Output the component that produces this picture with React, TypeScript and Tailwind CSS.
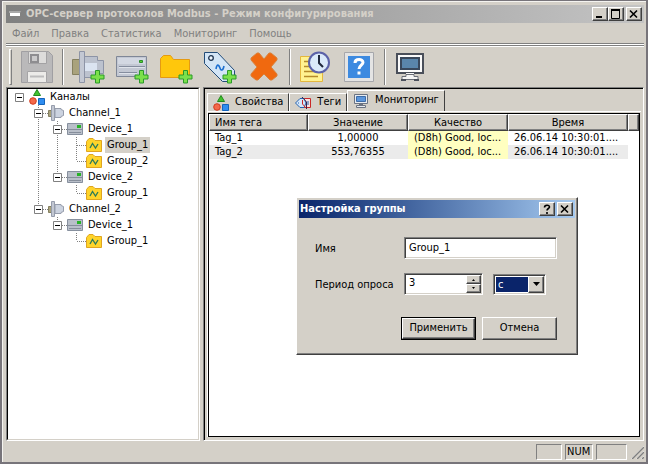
import { useState } from 'react';
import type { ReactNode } from 'react';
import clsx from 'clsx';

/** Raised 3D edge shared by push buttons, caption buttons and column headers. */
const RAISED =
  'border border-t-white border-l-white border-r-[#404040] border-b-[#404040] bg-[#d4d0c8] shadow-[inset_-1px_-1px_#808080]';
/** Sunken 3D edge shared by text boxes. */
const SUNKEN =
  'border border-t-[#808080] border-l-[#808080] border-r-white border-b-white bg-white shadow-[inset_1px_1px_#404040,inset_-1px_-1px_#d4d0c8]';

/* ── Icons ── */

function Plus() {
  return (
    <path
      d="M23.500 19.500h4v4.500h4.500v4h-4.500v4h-4v-4H19v-4h4.500z"
      fill="#7be04b"
      stroke="#2a9a2a"
      strokeWidth="1"
    />
  );
}

function ToolIcon({ children }: { children: ReactNode }) {
  return (
    <svg viewBox="0 0 33 33" className="size-[33px]" fill="none" aria-hidden="true">
      {children}
    </svg>
  );
}

function SaveIcon() {
  return (
    <ToolIcon>
      <path d="M.5.5h27l4 4v27H.5z" fill="#bab9ba" stroke="#a09fa2" />
      <path d="M7.500.5h18v12h-18z" fill="#dddcdb" stroke="#a3a2a4" />
      <path d="M10 4h7v7h-7z" fill="#cbcacb" stroke="#8e8d90" strokeWidth="2" />
      <path d="M6.500 20.500h19v11h-19z" fill="#ecebe9" stroke="#a5a4a6" />
      <path d="M9 25.500h14" stroke="#bdbcbd" strokeWidth="2" />
    </ToolIcon>
  );
}

function ChannelAddIcon() {
  return (
    <ToolIcon>
      <path d="M.5 8.500h7v15h-7z" fill="#a9a27c" stroke="#85805f" />
      <path d="M12.500 5.500h13v4h6v13h-6v4h-13z" fill="#bcc2ce" stroke="#8d94a6" />
      <path d="M7.500.5h5v31h-5z" fill="#c3c8d3" stroke="#8d94a6" />
      <path d="M13 12h12v8H13z" fill="#dbe4f1" />
      <Plus />
    </ToolIcon>
  );
}

function DeviceAddIcon() {
  return (
    <ToolIcon>
      <path d="M.5 5.500h30v20H.5z" fill="#c3c8d3" stroke="#7f8797" />
      <path d="M2 7h27v6H2z" fill="#d3d8e2" />
      <path d="M3 15.500h26M3 21.500h18" stroke="#858d9e" />
      <path d="M3 16.500h26M3 22.500h18" stroke="#dfe3ea" />
      <path d="M23.500 9.500h3v2h-3z" fill="#5ad62f" stroke="#2c8c2c" />
      <Plus />
    </ToolIcon>
  );
}

function GroupAddIcon() {
  return (
    <ToolIcon>
      <path d="M.5 7.500l3-3h7l3 4h16v18H.5z" fill="#ffc70c" stroke="#e59a12" />
      <Plus />
    </ToolIcon>
  );
}

function TagAddIcon() {
  return (
    <ToolIcon>
      <path d="M.5 1.500h13l17 18v6l-7 5h-5L.5 12.500z" fill="#d3e5f6" stroke="#234c78" />
      <circle cx="7" cy="7" r="2.300" fill="#eef6fd" stroke="#1d3350" strokeWidth="1.300" />
      <path d="M12 18c1-6 3-4 4-1s3 3 4-2" stroke="#1c6fd0" strokeWidth="1.600" />
      <Plus />
    </ToolIcon>
  );
}

function DeleteIcon() {
  return (
    <ToolIcon>
      <path
        d="M3 7l6-5h2l5 6 5-6h2l6 5v2l-6 7 6 7v2l-5 4h-2l-6-6-6 6H8l-5-4v-2l6-7-6-7z"
        fill="#f0690f"
        stroke="#d9823c"
        strokeWidth="1"
      />
    </ToolIcon>
  );
}

function LogIcon() {
  return (
    <ToolIcon>
      <path d="M1.500 5.500h22v25h-22z" fill="#fff291" stroke="#e4b73d" />
      <path d="M5 10.500h6M5 15.500h6M5 20.500h13M5 25.500h14" stroke="#b58a2a" strokeWidth="1.500" />
      <circle cx="20" cy="11.500" r="10" fill="#dbeafa" stroke="#5c62a8" strokeWidth="2" />
      <path d="M20 4v8l4 4" stroke="#20283c" strokeWidth="2" />
    </ToolIcon>
  );
}

function HelpIcon() {
  return (
    <ToolIcon>
      <path d="M1.500 1.500h29v29h-29z" fill="#e4e4e4" stroke="#a6a7ab" />
      <path d="M5 5h22v22H5z" fill="#3d8ae0" />
      <path d="M12 12c0-4.500 8-4.500 8-.5 0 2.500-4 3-4 6.500" stroke="#fff" strokeWidth="3" />
      <path d="M14.500 20.500h3v3h-3z" fill="#fff" />
    </ToolIcon>
  );
}

function MonitorLargeIcon() {
  return (
    <ToolIcon>
      <path d="M2 2h28v21H2z" fill="#4a4f5a" />
      <path d="M4 4h24v17H4z" fill="#fafafa" />
      <path d="M7 7h18v11H7z" fill="#5a86ac" stroke="#39485c" strokeWidth="2" />
      <path d="M12 22h8v3h-8z" fill="#f4f4f4" />
      <path d="M8 25.500h4v-2h8v2h4v3H8z" fill="#f4f4f4" stroke="#6a6e78" />
      <path d="M7 29h5M20 29h5" stroke="#4a4f5a" strokeWidth="2" />
    </ToolIcon>
  );
}

function SmallIcon({ children }: { children: ReactNode }) {
  return (
    <svg viewBox="0 0 16 16" className="size-4 shrink-0" fill="none" aria-hidden="true">
      {children}
    </svg>
  );
}

function ShapesIcon() {
  return (
    <SmallIcon>
      <path d="M8 .5l3.500 6h-7z" fill="#43c22f" stroke="#218a1c" />
      <circle cx="4" cy="12" r="3.300" fill="#f4694a" stroke="#d23c20" />
      <path d="M9.500 9.500h6v6h-6z" fill="#2f8df0" stroke="#1464bb" />
    </SmallIcon>
  );
}

function ChannelIcon() {
  return (
    <SmallIcon>
      <path d="M.5 5.500h3v6h-3z" fill="#a9a27c" stroke="#85805f" />
      <path d="M7 3.500h6v1l2.500 1v5l-2.500 1v1H7z" fill="#ccd3e0" stroke="#969dac" />
      <path d="M3.500.5h3v15h-3z" fill="#c3c8d3" stroke="#969dac" />
    </SmallIcon>
  );
}

function DeviceIcon() {
  return (
    <SmallIcon>
      <path d="M.5 2.500h15v11H.5z" fill="#b9bfc9" stroke="#87909e" />
      <path d="M1 8.500h14M2 11.500h12" stroke="#868e9b" />
      <path d="M10 4h4v3h-4z" fill="#27b327" />
    </SmallIcon>
  );
}

function GroupIcon() {
  return (
    <SmallIcon>
      <path d="M.5 4.500l2.500-3h4l2 2h6.500v11H.5z" fill="#ffd42a" stroke="#dfa520" />
      <path d="M4 11l2.500-4.500 3 4.500L12 7" stroke="#2a7a5a" strokeWidth="1.300" />
    </SmallIcon>
  );
}

function TagsIcon() {
  return (
    <SmallIcon>
      <path d="M8 3.500h7.500v9H8" fill="#fbe0de" stroke="#c92828" />
      <path d="M.5 8L5 3.500h4L11 8l-2 4.500H5z" fill="#d5e6f9" stroke="#2463b0" />
      <path d="M7 2l4.500 5v7" stroke="#3c2148" />
      <path d="M7.500 5v4l3.500 4" stroke="#c92828" />
      <path d="M3 8h1M13 6v4" stroke="#2463b0" />
    </SmallIcon>
  );
}

function MonitorIcon() {
  return (
    <SmallIcon>
      <path d="M1.500 1.500h13v9h-13z" fill="#e8ecf1" stroke="#6b7382" />
      <path d="M3.500 3.500h9v5h-9z" fill="#5b96dc" stroke="#3d6ca8" />
      <path d="M6 11h4v1.500H6z" fill="#6b7382" />
      <path d="M3.500 12.500h9v2h-9z" fill="#e8ecf1" stroke="#6b7382" />
    </SmallIcon>
  );
}

/* ── Tree ── */

type Cell = 'none' | 'line' | 'root' | 'tee' | 'last' | 'openTee' | 'openLast';

type TreeRow = {
  label: string;
  cells: Cell[];
  icon: ReactNode;
  selected?: boolean;
};

const TREE: TreeRow[] = [
  { label: 'Каналы', cells: ['root'], icon: <ShapesIcon /> },
  { label: 'Channel_1', cells: ['none', 'openTee'], icon: <ChannelIcon /> },
  { label: 'Device_1', cells: ['none', 'line', 'openTee'], icon: <DeviceIcon /> },
  { label: 'Group_1', cells: ['none', 'line', 'line', 'tee'], icon: <GroupIcon />, selected: true },
  { label: 'Group_2', cells: ['none', 'line', 'line', 'last'], icon: <GroupIcon /> },
  { label: 'Device_2', cells: ['none', 'line', 'openLast'], icon: <DeviceIcon /> },
  { label: 'Group_1', cells: ['none', 'line', 'none', 'last'], icon: <GroupIcon /> },
  { label: 'Channel_2', cells: ['none', 'openLast'], icon: <ChannelIcon /> },
  { label: 'Device_1', cells: ['none', 'none', 'openLast'], icon: <DeviceIcon /> },
  { label: 'Group_1', cells: ['none', 'none', 'none', 'last'], icon: <GroupIcon /> },
];

/** One 19px indent step: dotted connector lines plus the expander box. */
function TreeCell({ cell }: { cell: Cell }) {
  const open = cell === 'root' || cell === 'openTee' || cell === 'openLast';
  const full = cell === 'line' || cell === 'tee' || cell === 'openTee';
  const half = cell === 'last' || cell === 'openLast';
  const arm = cell !== 'none' && cell !== 'line' && cell !== 'root';
  return (
    <svg viewBox="0 0 19 16" className="h-4 w-[19px] shrink-0" fill="none" aria-hidden="true">
      <g stroke="#808080" strokeDasharray="1 1">
        {full && <path d="M9.500 0v16" />}
        {half && <path d="M9.500 0v8" />}
        {arm && <path d="M10 8.500h9" />}
      </g>
      {open && (
        <>
          <path d="M5.500 4.500h8v8h-8z" fill="#fff" stroke="#808080" />
          <path d="M7 8.500h5" stroke="#000" />
        </>
      )}
    </svg>
  );
}

function ChannelTree() {
  return (
    <ul role="tree" className="pl-0.5">
      {TREE.map((row, i) => (
        <li key={i} role="treeitem" aria-selected={!!row.selected} className="flex h-4 items-center">
          {row.cells.map((cell, j) => (
            <TreeCell key={j} cell={cell} />
          ))}
          {row.icon}
          <span className={clsx('ml-[3px] px-0.5 leading-4', row.selected && 'bg-[#d4d0c8]')}>{row.label}</span>
        </li>
      ))}
    </ul>
  );
}

/* ── Window chrome ── */

function CaptionButton({ label, children }: { label: string; children: ReactNode }) {
  return (
    <button type="button" aria-label={label} className={clsx('flex h-3.5 w-4 items-center justify-center', RAISED)}>
      <svg viewBox="0 0 12 10" className="h-2.5 w-3" fill="none" stroke="#000" aria-hidden="true">
        {children}
      </svg>
    </button>
  );
}

const CROSS = <path d="M2 1.500l7 7M9 1.500l-7 7" strokeWidth="1.600" />;

const MENU = ['Файл', 'Правка', 'Статистика', 'Мониторинг', 'Помощь'];

const TOOL_GROUPS = [
  [{ label: 'Сохранить', icon: <SaveIcon /> }],
  [
    { label: 'Добавить канал', icon: <ChannelAddIcon /> },
    { label: 'Добавить устройство', icon: <DeviceAddIcon /> },
    { label: 'Добавить группу', icon: <GroupAddIcon /> },
    { label: 'Добавить тег', icon: <TagAddIcon /> },
    { label: 'Удалить', icon: <DeleteIcon /> },
  ],
  [
    { label: 'Журнал', icon: <LogIcon /> },
    { label: 'Справка', icon: <HelpIcon /> },
  ],
  [{ label: 'Мониторинг', icon: <MonitorLargeIcon /> }],
];

function Toolbar() {
  return (
    <div role="toolbar" className="flex h-10 items-center pl-[3px]">
      <div className="h-9 w-[3px] border border-t-white border-r-[#808080] border-b-[#808080] border-l-white" />
      {TOOL_GROUPS.map((group, i) => (
        <div key={i} className={clsx('flex h-9 items-center', i > 0 && 'border-l border-[#808080] shadow-[inset_1px_0_#fff]')}>
          <div className="flex gap-[11px] pr-2 pl-[9px]">
            {group.map((tool) => (
              <button key={tool.label} type="button" aria-label={tool.label}>
                {tool.icon}
              </button>
            ))}
          </div>
        </div>
      ))}
    </div>
  );
}

/* ── Tag table ── */

const TAGS = [
  { name: 'Tag_1', value: '1,00000', quality: '(D8h) Good, loc...', time: '26.06.14 10:30:01....' },
  { name: 'Tag_2', value: '553,76355', quality: '(D8h) Good, loc...', time: '26.06.14 10:30:01....' },
];

function TagTable() {
  const head = clsx('h-[17px] p-0 font-normal', RAISED);
  return (
    <table className="w-full table-fixed border-separate border-spacing-0 whitespace-nowrap">
      <colgroup>
        <col className="w-[99px]" />
        <col className="w-[100px]" />
        <col className="w-[100px]" />
        <col className="w-[120px]" />
        <col />
      </colgroup>
      <thead>
        <tr className="leading-[15px]">
          <th className={clsx(head, 'pl-[5px] text-left')}>Имя тега</th>
          <th className={head}>Значение</th>
          <th className={head}>Качество</th>
          <th className={head}>Время</th>
          <td className={head} />
        </tr>
      </thead>
      <tbody>
        {TAGS.map((tag, i) => (
          <tr key={tag.name} className={clsx('leading-[14px]', i % 2 === 1 && 'bg-[#ebebeb]')}>
            <td className="p-0 pl-1.5">{tag.name}</td>
            <td className="p-0 text-center">{tag.value}</td>
            <td className="bg-[#ffffc0] p-0 pl-1.5">{tag.quality}</td>
            <td className="p-0 pl-1.5">{tag.time}</td>
            <td className="bg-white p-0" />
          </tr>
        ))}
      </tbody>
    </table>
  );
}

function Tab({ icon, label, selected }: { icon: ReactNode; label: string; selected?: boolean }) {
  return (
    <button
      type="button"
      role="tab"
      aria-selected={!!selected}
      className={clsx(
        'flex items-center gap-1.5 border-t border-r border-l border-t-white border-r-[#404040] border-l-white px-[5px]',
        selected ? '-mb-px h-[22px] bg-[#d4d0c8] pb-0.5' : 'h-[18px]',
      )}
    >
      {icon}
      {label}
    </button>
  );
}

/* ── Group settings dialog ── */

function GroupDialog() {
  const [name, setName] = useState('Group_1');
  const [period, setPeriod] = useState('3');
  const step = (d: number) => setPeriod((p) => String(Math.max(0, Number(p) + d)));

  return (
    <section
      role="dialog"
      aria-labelledby="dlg-title"
      className={clsx('absolute top-[197px] left-[296px] w-[282px] p-0.5', RAISED)}
    >
      <header className="flex h-[18px] items-center justify-between bg-linear-to-r from-[#0a246a] to-[#a6caf0] pr-0.5 pl-px">
        <h2 id="dlg-title" className="font-bold text-white">
          Настройка группы
        </h2>
        <div className="flex gap-0.5">
          <CaptionButton label="Справка">
            <path d="M3.500 3.500c0-3 5-3 5-.5 0 1.500-2.500 1.500-2.500 3.500M6 8v2" strokeWidth="1.600" />
          </CaptionButton>
          <CaptionButton label="Закрыть">{CROSS}</CaptionButton>
        </div>
      </header>
      <form className="px-4 pt-[19px] pb-3" onSubmit={(e) => e.preventDefault()}>
        <div className="flex items-center">
          <label htmlFor="group-name" className="w-[89px] shrink-0 pt-[3px]">
            Имя
          </label>
          <input
            id="group-name"
            value={name}
            onChange={(e) => setName(e.target.value)}
            className={clsx('h-[22px] w-[153px] px-1 pb-0.5 outline-none', SUNKEN)}
          />
        </div>
        <div className="mt-3.5 flex items-center">
          <label htmlFor="group-period" className="w-[89px] shrink-0 pt-[3px]">
            Период опроса
          </label>
          <div className={clsx('flex h-[22px] w-[79px] p-px', SUNKEN)}>
            <input
              id="group-period"
              value={period}
              onChange={(e) => setPeriod(e.target.value)}
              className="min-w-0 flex-1 px-[3px] pb-0.5 outline-none"
            />
            <div className="flex w-[15px] flex-col">
              <button type="button" aria-label="Больше" onClick={() => step(1)} className={clsx('flex flex-1 items-center justify-center', RAISED)}>
                <svg viewBox="0 0 5 3" className="h-[3px] w-[5px]" aria-hidden="true">
                  <path d="M1 3L2.500 1 4 3z" />
                </svg>
              </button>
              <button type="button" aria-label="Меньше" onClick={() => step(-1)} className={clsx('flex flex-1 items-center justify-center', RAISED)}>
                <svg viewBox="0 0 5 3" className="h-[3px] w-[5px]" aria-hidden="true">
                  <path d="M1 0l1.500 2L4 0z" />
                </svg>
              </button>
            </div>
          </div>
          <div className={clsx('relative ml-2.5 h-[21px] w-[53px] p-0.5', SUNKEN)}>
            <select aria-label="Единица времени" className="block h-full w-8 appearance-none bg-[#0a246a] pt-px pl-0.5 leading-[14px] text-white outline-none">
              <option>с</option>
              <option>мс</option>
            </select>
            <span className={clsx('pointer-events-none absolute top-px right-px flex h-[17px] w-4 items-center justify-center', RAISED)}>
              <svg viewBox="0 0 7 4" className="h-1 w-[7px]" aria-hidden="true">
                <path d="M0 0h7L3.500 4z" />
              </svg>
            </span>
          </div>
        </div>
        <div className="mt-[22px] flex justify-end gap-1.5">
          <button type="submit" className="h-[23px] w-[75px] border border-black">
            <span className={clsx('flex h-full items-center justify-center', RAISED)}>Применить</span>
          </button>
          <button type="button" className={clsx('mr-0.5 h-[23px] w-[75px]', RAISED)}>
            Отмена
          </button>
        </div>
      </form>
    </section>
  );
}

export default function App() {
  const pane = 'border border-t-[#808080] border-l-[#808080] border-r-white border-b-white';
  const statusCell = 'h-4 border border-t-[#808080] border-l-[#808080] border-r-white border-b-white';

  return (
    <div className="relative h-screen bg-[#77747a] pt-px pr-0.5 pb-0.5 pl-0.5 font-['DejaVu_Sans_Condensed','DejaVu_Sans',sans-serif] text-[11px] text-black">
      <div className="flex h-full flex-col border-t border-l border-[#f4f3f0] bg-[#d4d0c8] pt-[3px] pr-0.5 pl-[3px]">
        <header className="flex h-[18px] shrink-0 items-center bg-linear-to-r from-[#808080] to-[#c4c4c4] pr-0.5 pl-[3px]">
          <svg viewBox="0 0 14 8" className="h-2 w-3.5" aria-hidden="true">
            <path d="M0 1h12l-1 2H0z" fill="#a9a9a9" />
            <path d="M1 3h10v3H1z" fill="#fff" />
          </svg>
          <h1 className="ml-[3px] flex-1 font-bold whitespace-nowrap text-[#d4d0c8]">
            OPC-сервер протоколов Modbus - Режим конфигурирования
          </h1>
          <CaptionButton label="Свернуть">
            <path d="M2 8h6" strokeWidth="2" />
          </CaptionButton>
          <CaptionButton label="Развернуть">
            <path d="M1.500 1v8.500h8V1" />
            <path d="M1 1h9" strokeWidth="2" />
          </CaptionButton>
          <div className="ml-0.5 flex">
            <CaptionButton label="Закрыть">{CROSS}</CaptionButton>
          </div>
        </header>
        <nav className="flex h-5 shrink-0 items-center gap-3 pt-0.5 pl-1.5 text-[#808080]">
          {MENU.map((item) => (
            <button key={item} type="button">
              {item}
            </button>
          ))}
        </nav>
        <div className="h-0.5 shrink-0 border-t border-b border-t-[#808080] border-b-white" />
        <div className="h-0.5 shrink-0 border-t border-b border-t-[#808080] border-b-white" />
        <Toolbar />

        <main className="flex min-h-0 flex-1 gap-[3px]">
          <aside className={clsx('w-[194px] shrink-0', pane)}>
            <div className="h-full border border-t-black border-r-[#d4d0c8] border-b-[#d4d0c8] border-l-black bg-white">
              <ChannelTree />
            </div>
          </aside>
          <section className={clsx('min-w-0 flex-1', pane)}>
            <div className="flex h-full flex-col border-t border-l border-black px-0.5 pt-px pb-[3px]">
              <div role="tablist" className="flex h-[21px] shrink-0 items-end">
                <Tab icon={<ShapesIcon />} label="Свойства" />
                <Tab icon={<TagsIcon />} label="Теги" />
                <Tab icon={<MonitorIcon />} label="Мониторинг" selected />
              </div>
              <div className="flex min-h-0 flex-1 flex-col border-t border-l border-white pt-px pr-px">
                <div className="min-h-0 flex-1 border border-black bg-white">
                  <TagTable />
                </div>
              </div>
            </div>
          </section>
        </main>

        <footer className="flex h-[21px] shrink-0 items-center justify-end gap-[3px]">
          <div className={clsx(statusCell, 'w-[26px]')} />
          <div className={clsx(statusCell, 'w-7 pl-px leading-[14px]')}>NUM</div>
          <div className={clsx(statusCell, 'w-[31px]')} />
          <svg viewBox="0 0 14 14" className="size-3.5" aria-hidden="true">
            <path d="M1 14L14 1M6 14l8-8M11 14l3-3" stroke="#fff" strokeWidth="1" />
            <path d="M2 14L14 2M7 14l7-7M12 14l2-2" stroke="#808080" strokeWidth="1.500" />
          </svg>
        </footer>
      </div>
      <GroupDialog />
    </div>
  );
}
